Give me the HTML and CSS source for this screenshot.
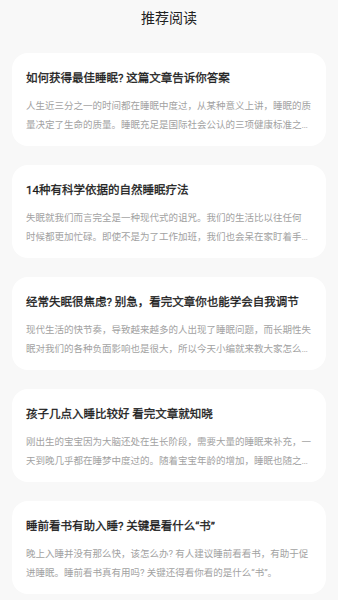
FILE: index.html
```html
<!DOCTYPE html>
<html lang="zh-CN">
<head>
<meta charset="utf-8">
<meta name="viewport" content="width=device-width, initial-scale=1">
<title>推荐阅读</title>
<link rel="stylesheet" href="styles.css">
</head>
<body>
<header class="topbar">推荐阅读</header>
<main class="list">
  <article class="card">
    <h2 class="card-title">如何获得最佳睡眠? 这篇文章告诉你答案</h2>
    <p class="card-desc">人生近三分之一的时间都在睡眠中度过，从某种意义上讲，睡眠的质量决定了生命的质量。睡眠充足是国际社会公认的三项健康标准之一，而睡眠不足则会影响身体健康。</p>
  </article>
  <article class="card">
    <h2 class="card-title">14种有科学依据的自然睡眠疗法</h2>
    <p class="card-desc">失眠就我们而言完全是一种现代式的诅咒。我们的生活比以往任何<span class="word">时候</span>都更加忙碌。即使不是为了工作加班，我们也会呆在家盯着手机屏幕，直到深夜才入睡。</p>
  </article>
  <article class="card">
    <h2 class="card-title">经常失眠很焦虑? 别急，看完文章你也能学会自我调节</h2>
    <p class="card-desc">现代生活的快节奏，导致越来越多的人出现了睡眠问题，而长期性失眠对我们的各种负面影响也是很大，所以今天小编就来教大家怎么自我调节。</p>
  </article>
  <article class="card">
    <h2 class="card-title">孩子几点入睡比较好 看完文章就知晓</h2>
    <p class="card-desc">刚出生的宝宝因为大脑还处在生长阶段，需要大量的睡眠来补充，一天到晚几乎都在睡梦中度过的。随着宝宝年龄的增加，睡眠也随之减少。</p>
  </article>
  <article class="card">
    <h2 class="card-title">睡前看书有助入睡? 关键是看什么“书”</h2>
    <p class="card-desc">晚上入睡并没有那么快，该怎么办? 有人建议睡前看看书，有助于促进睡眠。睡前看书真有用吗? 关键还得看你看的是什么“书”。</p>
  </article>
</main>
</body>
</html>
```

FILE: styles.css
```css
* {
  box-sizing: border-box;
}

html, body {
  margin: 0;
  padding: 0;
}

body {
  background: #f8f8f8;
  font-family: Roboto, "Noto Sans CJK SC", sans-serif;
  color: #222;
}

.topbar {
  height: 36px;
  line-height: 36px;
  text-align: center;
  font-size: 14px;
  color: #222;
}

.list {
  display: flex;
  flex-direction: column;
  gap: 19px;
  padding: 17px 12px 20px;
}

.card {
  background: #fff;
  border-radius: 16px;
  padding: 17px 12px 12px 14px;
}

.card-title {
  margin: 0;
  font-size: 11.5px;
  line-height: 16px;
  font-weight: 400;
  -webkit-text-stroke: 0.3px #1a1a1a;
  color: #1a1a1a;
  white-space: nowrap;
}

.card-desc {
  margin: 10px 0 0;
  font-size: 9.5px;
  line-height: 19px;
  color: #a2a2a2;
  display: -webkit-box;
  -webkit-box-orient: vertical;
  -webkit-line-clamp: 2;
  overflow: hidden;
}

.word {
  white-space: nowrap;
}
```
